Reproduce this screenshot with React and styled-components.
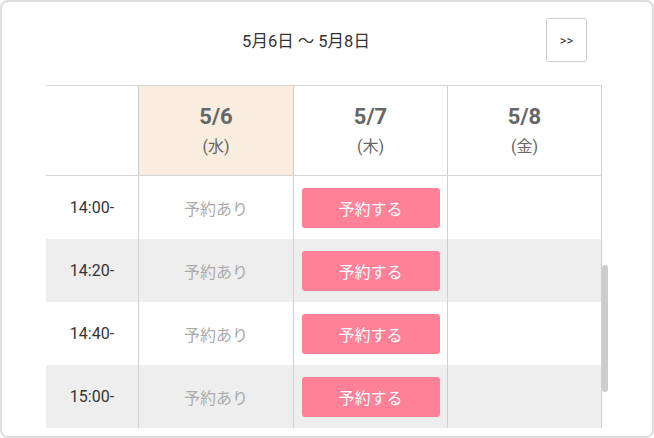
import React from 'react';
import styled, { createGlobalStyle } from 'styled-components';

const GlobalStyle = createGlobalStyle`
  html, body {
    margin: 0;
    padding: 0;
    background: #fff;
  }
  body {
    font-family: Roboto, 'Noto Sans CJK JP', sans-serif;
    color: #333;
  }
`;

const Card = styled.div`
  box-sizing: border-box;
  width: 654px;
  height: 438px;
  border: 2px solid #dddddd;
  border-radius: 8px;
  background: #fff;
  overflow: hidden;
`;

const Header = styled.div`
  display: flex;
  align-items: center;
  height: 44px;
  margin-top: 16px;
  padding: 0 65px 0 64px;
`;

const Title = styled.div`
  flex: 1;
  text-align: center;
  font-size: 16.5px;
  color: #333;
`;

const NextButton = styled.button`
  box-sizing: border-box;
  width: 41px;
  height: 44px;
  border: 1px solid #cccccc;
  border-radius: 3px;
  background: #fff;
  color: #333;
  font-family: Roboto, sans-serif;
  font-size: 13px;
  padding: 0;
  cursor: pointer;
`;

const Schedule = styled.div`
  margin: 23px 0 0 44px;
`;

const Row = styled.div`
  display: grid;
  grid-template-columns: 92px 155px 154px 155px;
  width: 556px;
  background: ${(p) => (p.$shade ? '#eeeeee' : '#fff')};
`;

const HeadRow = styled(Row)`
  height: 91px;
  border-top: 1px solid #d6d6d6;
  border-bottom: 1px solid #d6d6d6;
  box-sizing: border-box;
`;

const Cell = styled.div`
  display: flex;
  align-items: center;
  justify-content: center;
  box-sizing: border-box;
  border-left: ${(p) => (p.$first ? 'none' : '1px solid #d0d0d0')};
  border-right: ${(p) => (p.$last ? '1px solid #d0d0d0' : 'none')};
  background: ${(p) => (p.$today ? '#f9ede0' : 'transparent')};
`;

const DateCell = styled(Cell)`
  flex-direction: column;
  padding-top: 3px;
  color: #666;
`;

const DateNum = styled.div`
  font-size: 22px;
  font-weight: 700;
  line-height: 30px;
`;

const DayName = styled.div`
  font-size: 16px;
  line-height: 30px;
`;

const BodyWrap = styled.div`
  display: flex;
  align-items: flex-start;
`;

const Body = styled.div`
  width: 556px;
  height: 253px;
  overflow: hidden;
`;

const ScrollTrack = styled.div`
  width: 6px;
  padding-top: 89px;
`;

const Thumb = styled.div`
  height: 127px;
  border-radius: 3px;
  background: #cccccc;
`;

const SlotRow = styled(Row)`
  height: 63px;
`;

const Time = styled(Cell)`
  font-size: 16px;
  color: #333;
`;

const Booked = styled(Cell)`
  font-size: 16px;
  color: #aaaaaa;
`;

const ReserveButton = styled.button`
  width: 138px;
  height: 40px;
  border: none;
  border-radius: 3px;
  background: #ff8198;
  color: #fff;
  font-family: Roboto, 'Noto Sans CJK JP', sans-serif;
  font-size: 16px;
  cursor: pointer;
`;

const days = [
  { date: '5/6', day: '(水)', today: true },
  { date: '5/7', day: '(木)' },
  { date: '5/8', day: '(金)' },
];

const slots = ['14:00', '14:20', '14:40', '15:00'];

const App = () => {
  return (
    <>
      <GlobalStyle />
      <Card>
        <Header>
          <Title>5月6日 〜 5月8日</Title>
          <NextButton>&gt;&gt;</NextButton>
        </Header>
        <Schedule>
          <HeadRow>
            <Cell $first />
            {days.map((d, i) => (
              <DateCell key={d.date} $today={d.today} $last={i === days.length - 1}>
                <DateNum>{d.date}</DateNum>
                <DayName>{d.day}</DayName>
              </DateCell>
            ))}
          </HeadRow>
          <BodyWrap>
            <Body>
              {slots.map((t, i) => (
                <SlotRow key={t} $shade={i % 2 === 1}>
                  <Time $first>{t}-</Time>
                  <Booked>予約あり</Booked>
                  <Cell>
                    <ReserveButton>予約する</ReserveButton>
                  </Cell>
                  <Cell $last />
                </SlotRow>
              ))}
            </Body>
            <ScrollTrack>
              <Thumb />
            </ScrollTrack>
          </BodyWrap>
        </Schedule>
      </Card>
    </>
  );
};

export default App;
